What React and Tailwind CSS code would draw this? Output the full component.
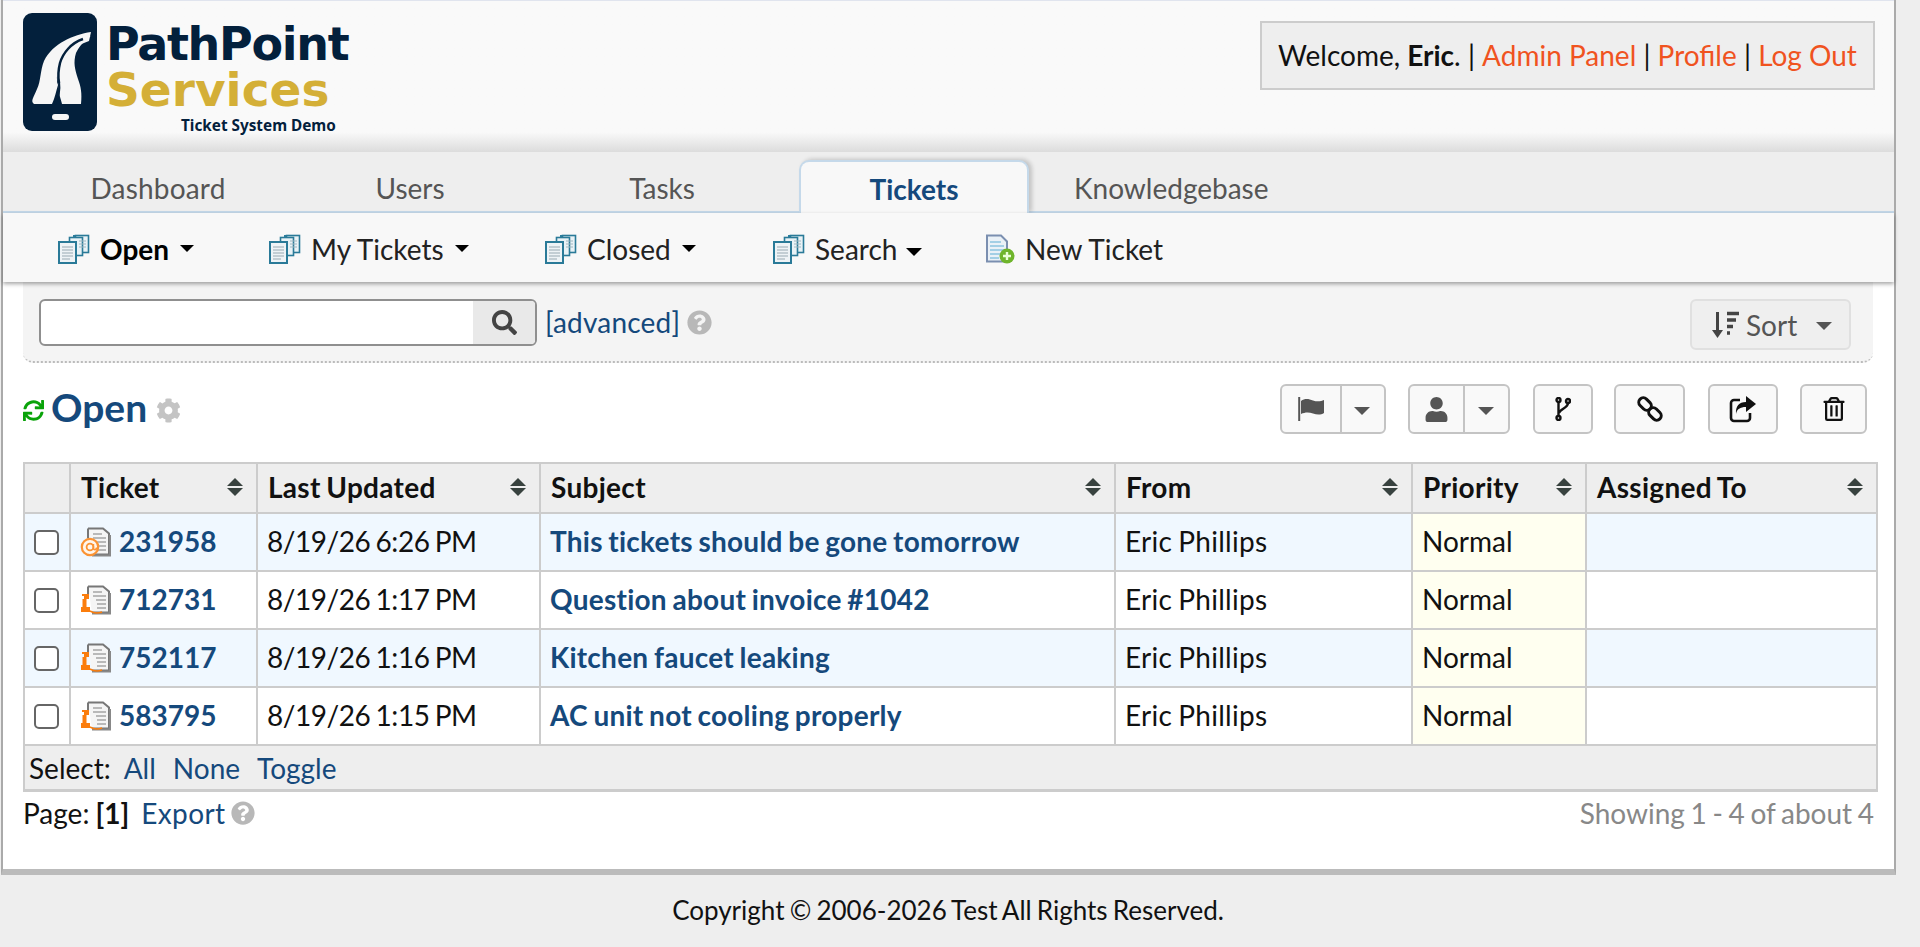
import React from "react";
import { FaSync, FaCog, FaQuestionCircle, FaSearch, FaUser, FaRegTrashAlt } from "react-icons/fa";

function DocStack() {
  return (
    <svg width="32" height="30" viewBox="0 0 32 30" className="shrink-0">
      <path d="M15 1h10l2 2h-12z" fill="#2d7f9e" />
      <rect x="17.5" y="1.5" width="13" height="17" fill="#e9f2f6" stroke="#2a7a98" strokeWidth="1.6" />
      <rect x="11.5" y="3.5" width="13" height="18" fill="#e9f2f6" stroke="#2a7a98" strokeWidth="1.6" />
      <rect x="1" y="8" width="17" height="21" fill="#eef3f6" stroke="#2a7a98" strokeWidth="2" />
      <path d="M4 13h11M4 16h11M4 19h11M4 22h11M4 25h8" stroke="#b5c2c9" strokeWidth="1.4" />
      <path d="M21 7h7M21 10h7M21 13h7" stroke="#9fb5c0" strokeWidth="1.2" />
    </svg>
  );
}

function NewDoc() {
  return (
    <svg width="30" height="30" viewBox="0 0 30 30" className="shrink-0">
      <path d="M2 1.5h14l6 6v20H2z" fill="#eaf1f7" stroke="#7b8fb0" strokeWidth="2" />
      <path d="M5 8h11M5 12h14M5 16h14M5 20h10M5 24h9" stroke="#8cc3e0" strokeWidth="1.6" />
      <circle cx="22" cy="22" r="7.5" fill="#6fb52c" />
      <path d="M18 22h8M22 18v8" stroke="#eaffd8" strokeWidth="2.4" />
    </svg>
  );
}

function TicketIcon({ kind }) {
  return (
    <svg width="32" height="30" viewBox="0 0 32 30" className="shrink-0">
      <path d="M8 1.5h15l6 5v21H12" fill="#f5f5f5" stroke="#777" strokeWidth="2" />
      <path d="M8 1.5v10" stroke="#777" strokeWidth="2" />
      <path d="M12 28.5h18V8" fill="none" stroke="#888" strokeWidth="2" />
      <path d="M13 7h9M13 11h13M16 15h10M17 19h9M17 23h9" stroke="#a5a5a5" strokeWidth="1.5" />
      {kind === "mail" ? (
        <g fill="none" stroke="#fb9333">
          <circle cx="10" cy="20" r="8.2" strokeWidth="2.2" fill="#fff6ec" />
          <circle cx="10" cy="20" r="3.4" strokeWidth="1.8" />
          <path d="M13.4 17v4.2c0 2 3.2 2 3.2 -.8" strokeWidth="1.6" />
        </g>
      ) : (
        <g>
          <path d="M2 9h7v5H6.5v8H10v5H1v-5h1.5v-8H4v-3H2z" fill="#fb7d0c" />
          <path d="M10 26c4 2.5 8 2.5 12 1" fill="none" stroke="#fb7d0c" strokeWidth="1.6" />
        </g>
      )}
    </svg>
  );
}

function Caret({ className = "" }) {
  return <span className={"inline-block h-0 w-0 border-x-[7px] border-t-[7px] border-x-transparent border-t-black " + className} />;
}

function GrayCaret() {
  return <span className="inline-block h-0 w-0 border-x-[8px] border-t-[8px] border-x-transparent border-t-[#555]" />;
}

function SortArrows() {
  return (
    <span className="ml-auto flex flex-col gap-[2px]">
      <span className="block h-0 w-0 border-x-[8px] border-b-[8px] border-x-transparent border-b-[#38423f]" />
      <span className="block h-0 w-0 border-x-[8px] border-t-[8px] border-x-transparent border-t-[#38423f]" />
    </span>
  );
}

function SubItem({ label, bold, width, big }) {
  return (
    <div className={"flex items-center " + width}>
      <DocStack />
      <span className={"ml-[10px] [word-spacing:0] " + (bold ? "font-bold text-black" : "text-[#222]")}>{label}</span>
      {big ? <Caret className="ml-[9px] mt-[5px] border-x-[8px] border-t-[8px]" /> : <Caret className="ml-[11px] mt-[-2px]" />}
    </div>
  );
}

function ToolBtn({ w, children }) {
  return (
    <div className={"flex h-[50px] items-center justify-center rounded-[6px] border-2 border-[#c4c4c4] bg-[#f9f9f9] " + w}>
      {children}
    </div>
  );
}

function SplitBtn({ w, left, icon }) {
  return (
    <div className={"flex h-[50px] items-stretch rounded-[6px] border-2 border-[#c4c4c4] bg-[#f9f9f9] " + w}>
      <div className={"flex items-center justify-center border-r-2 border-[#c4c4c4] " + left}>{icon}</div>
      <div className="flex flex-1 items-center justify-center pr-[2px] pt-[4px]"><GrayCaret /></div>
    </div>
  );
}

const rows = [
  { id: "231958", kind: "mail", date: "8/19/26 6:26 PM", subject: "This tickets should be gone tomorrow", even: true },
  { id: "712731", kind: "phone", date: "8/19/26 1:17 PM", subject: "Question about invoice #1042", even: false },
  { id: "752117", kind: "phone", date: "8/19/26 1:16 PM", subject: "Kitchen faucet leaking", even: true },
  { id: "583795", kind: "phone", date: "8/19/26 1:15 PM", subject: "AC unit not cooling properly", even: false },
];

const grid = "grid grid-cols-[46px_187px_283px_575px_297px_174px_1fr]";

export default function App() {
  return (
    <div className="min-h-[947px] overflow-hidden bg-[#eeeeee] font-['Lato',sans-serif] text-[28px] leading-[36px] text-black [word-spacing:-1.5px]">
      <div className="ml-[1px] mr-[24px] border-x-2 border-b-[6px] border-x-[#aaaaaa] border-b-[#bbbbbb] bg-white">
        {/* header */}
        <header className="flex h-[152px] items-start justify-between border-t-[1px] border-[#e0e4ee] bg-gradient-to-b from-[#f9f9f9] from-[87%] to-[#dcdcdc]">
          <div className="ml-[20px] mt-[12px] flex">
            <svg width="74" height="118" viewBox="0 0 74 118" className="shrink-0">
              <rect width="74" height="118" rx="9" fill="#03203c" />
              <path d="M68 19 C50 22 30 30 21 48 C17 58 18 68 14 76 C11 84 7 88 11 91 L29 91 C32 85 33 78 35 72 C33 66 34 58 37 50 C42 40 50 34 66 28 Z" fill="#f6f6f6" />
              <path d="M56 28 C46 33 39 40 36 48 C33 58 34 66 36 72 C35 80 38 86 39 91 L58 91 C59 80 58 74 55 66 C52 56 50 50 53 40 C55 36 58 30 68 23 Z" fill="#f6f6f6" />
              <path d="M60 26 C48 30 40 40 37 50 C35 58 35 64 36 70" stroke="#03203c" strokeWidth="2.5" fill="none" />
              <path d="M36 68 C37 76 36 84 32 91" stroke="#03203c" strokeWidth="2" fill="none" />
              <rect x="29" y="101" width="17" height="6" rx="3" fill="#f6f6f6" />
            </svg>
            <div className="ml-[9px] font-['DejaVu_Sans',sans-serif] font-bold [word-spacing:0]">
              <div className="mt-[9px] text-[46px] leading-[45px] tracking-[-1.3px] text-[#03203c]">PathPoint</div>
              <div className="text-[47px] leading-[45px] text-[#d4af37]">Services</div>
              <div className="ml-[75px] mt-[4px] whitespace-nowrap font-['Noto_Sans',sans-serif] text-[15.3px] leading-[18px] text-[#03203c]">Ticket System Demo</div>
            </div>
          </div>
          <div className="mr-[19px] mt-[20px] flex h-[69px] w-[615px] items-center justify-center border-2 border-[#cccccc] bg-[#eeeeee] pb-[2px] whitespace-pre text-[#111] [word-spacing:0]">
            Welcome, <b>Eric</b>. | <span className="text-[#f0531f]">Admin Panel</span> | <span className="text-[#f0531f]">Profile</span> | <span className="text-[#f0531f]">Log Out</span>
          </div>
        </header>

        {/* tabs */}
        <nav className="flex h-[61px] items-end gap-[22px] border-b-2 border-[#c5d9ea] bg-[#eeeeee] pl-[40px] text-[#555]">
          <div className="flex h-[52px] w-[230px] items-center justify-center pt-[5px] tracking-[0.2px]">Dashboard</div>
          <div className="flex h-[52px] w-[230px] items-center justify-center pt-[5px]">Users</div>
          <div className="flex h-[52px] w-[230px] items-center justify-center pt-[5px]">Tasks</div>
          <div className="mb-[-2px] flex h-[53px] w-[230px] items-center justify-center rounded-t-[10px] border-x-2 border-t-2 border-[#c5d9ea] bg-[#f8f8f8] pt-[2px] font-bold text-[#15497c] shadow-[3px_-1px_4px_rgba(0,0,0,0.18)]">Tickets</div>
          <div className="flex h-[52px] items-center pl-[23px] pt-[5px]">Knowledgebase</div>
        </nav>

        {/* sub nav */}
        <div className="relative z-10 flex h-[69px] items-center bg-[#f8f8f8] pl-[55px] pt-[3px] shadow-[0_2px_4px_rgba(0,0,0,0.35)]">
          <SubItem label="Open" bold width="w-[211px]" />
          <SubItem label="My Tickets" width="w-[276px]" />
          <SubItem label="Closed" width="w-[228px]" />
          <SubItem label="Search" big width="w-[212px]" />
          <div className="flex items-center">
            <NewDoc />
            <span className="ml-[10px] text-[#222] [word-spacing:0]">New Ticket</span>
          </div>
        </div>

        {/* main */}
        <main className="pb-[38px] pl-[20px] pr-[21px]">
          <div className="flex h-[81px] items-start rounded-b-[10px] border-b-2 border-dotted border-[#bbbbbb] bg-[#f4f4f4] pl-[16px] pr-[22px] pt-[17px]">
            <div className="flex h-[47px] w-[498px] overflow-hidden rounded-[6px] border-2 border-[#8f8f8f] bg-white">
              <div className="flex-1" />
              <div className="flex w-[62px] items-center justify-center bg-[#e9e9e9] text-[#444]"><FaSearch size={25} /></div>
            </div>
            <span className="ml-[8px] mt-[5px] tracking-[0.2px] text-[#15497c]">[advanced]</span>
            <FaQuestionCircle className="ml-[7px] mt-[11px] text-[#b8b8b8]" size={25} />
            <div className="ml-auto flex h-[51px] w-[161px] items-center rounded-[6px] border-2 border-[#e0e0e0] bg-[#efefef] pl-[20px] text-[#555]">
              <svg width="30" height="28" viewBox="0 0 30 28" className="shrink-0">
                <path d="M5.5 1v22" stroke="#444" strokeWidth="3" />
                <path d="M0 19l5.5 8 5.5-8z" fill="#444" />
                <path d="M15 2.5h12M15 9h9M15 15.5h6M15 22h3" stroke="#444" strokeWidth="3.4" />
              </svg>
              <span className="ml-[4px]">Sort</span>
              <span className="ml-[19px] flex items-center pt-[3px]"><GrayCaret /></span>
            </div>
          </div>

          <div className="flex h-[99px] items-start">
            <FaSync className="mt-[37px] text-[#0aa30a]" size={21} />
            <h1 className="ml-[7px] mt-[21px] text-[39px] leading-[46px] font-bold text-[#15497c]">Open</h1>
            <FaCog className="ml-[9px] mt-[35px] text-[#c4c4c4]" size={25} />
            <div className="ml-auto mr-[6px] mt-[21px] flex">
              <SplitBtn
                w="w-[106px]"
                left="w-[60px]"
                icon={
                  <svg width="27" height="24" viewBox="0 0 27 24">
                    <path d="M1.2 0v24" stroke="#555" strokeWidth="2" />
                    <path d="M3 4c4-3 8-2 12-.5 4 1.400 8 1 11-.5v13c-3 2-7 2-11 .5-4-1.500-8-1.500-12 .5z" fill="#555" />
                  </svg>
                }
              />
              <div className="ml-[22px]"><SplitBtn w="w-[102px]" left="w-[55px]" icon={<FaUser size={25} className="text-[#555]" />} /></div>
              <div className="ml-[23px]">
                <ToolBtn w="w-[60px]">
                  <svg width="16" height="24" viewBox="0 0 16 24" fill="none" stroke="#111" strokeWidth="2.4">
                    <circle cx="3.5" cy="3" r="2" /><circle cx="13" cy="4" r="2" /><circle cx="3.500" cy="21" r="2" />
                    <path d="M3.5 5v14M13 6c0 5-8 6-9 10" />
                  </svg>
                </ToolBtn>
              </div>
              <div className="ml-[21px]">
                <ToolBtn w="w-[71px]">
                  <svg width="26" height="26" viewBox="0 0 26 26" fill="none" stroke="#111" strokeWidth="3">
                    <g transform="rotate(45 13 13)">
                      <rect x="-1" y="8.5" width="14" height="9" rx="4.500" />
                      <rect x="13" y="8.5" width="14" height="9" rx="4.500" />
                    </g>
                  </svg>
                </ToolBtn>
              </div>
              <div className="ml-[23px]">
                <ToolBtn w="w-[70px]">
                  <svg width="28" height="28" viewBox="0 0 28 28">
                    <path d="M11 5H5a3 3 0 0 0-3 3v15a3 3 0 0 0 3 3h13a3 3 0 0 0 3-3v-5" fill="none" stroke="#111" strokeWidth="2.600" />
                    <path d="M17 1l10 8-10 8v-5c-6 0-9 2-10 7-.5-8 3-12 10-12z" fill="#111" />
                  </svg>
                </ToolBtn>
              </div>
              <div className="ml-[22px]"><ToolBtn w="w-[67px]"><FaRegTrashAlt size={24} className="text-[#111]" /></ToolBtn></div>
            </div>
          </div>

          {/* table */}
          <div className="mr-[-5px] border-2 border-[#cccccc] border-b-[3px]">
            <div className={grid + " h-[50px] border-b-2 border-[#cccccc] bg-[#eeeeee] font-bold"}>
              <div className="border-r-2 border-[#cccccc]" />
              {["Ticket", "Last Updated", "Subject", "From", "Priority", "Assigned To"].map((h, i) => (
                <div key={h} className={"flex items-center pb-[2px] pl-[10px] pr-[13px] tracking-[0.3px] " + (i < 5 ? "border-r-2 border-[#cccccc]" : "")}>
                  <span className="text-[#111]">{h}</span>
                  <SortArrows />
                </div>
              ))}
            </div>
            {rows.map((r) => (
              <div key={r.id} className={grid + " h-[58px] border-b-2 border-[#cccccc] " + (r.even ? "bg-[#f0f8ff]" : "bg-white")}>
                <div className="flex items-center justify-center border-r-2 border-[#cccccc] pr-[2px]">
                  <span className="block h-[25px] w-[25px] rounded-[5px] border-2 border-[#666] bg-white" />
                </div>
                <div className="flex items-center border-r-2 border-[#cccccc] pl-[9px] text-[#15497c]">
                  <TicketIcon kind={r.kind} />
                  <span className="ml-[7px] pb-[2px] font-bold">{r.id}</span>
                </div>
                <div className="flex items-center border-r-2 border-[#cccccc] pb-[2px] pl-[9px] tracking-[-0.45px] text-[#111]">{r.date}</div>
                <div className="flex items-center border-r-2 border-[#cccccc] pb-[2px] pl-[9px] font-bold tracking-[0.25px] text-[#15497c]">{r.subject}</div>
                <div className="flex items-center border-r-2 border-[#cccccc] pb-[2px] pl-[9px] tracking-[0.3px] text-[#111]">Eric Phillips</div>
                <div className="flex items-center border-r-2 border-[#cccccc] bg-[#fffff0] pb-[2px] pl-[9px] text-[#111]">Normal</div>
                <div />
              </div>
            ))}
            <div className="flex h-[43px] items-center gap-[17px] bg-[#eeeeee] pl-[4px]">
              <span className="text-[#111]">Select:</span>
              <span className="ml-[-4px] text-[#15497c]">All</span>
              <span className="text-[#15497c]">None</span>
              <span className="text-[#15497c]">Toggle</span>
            </div>
          </div>
          <div className="mt-[3px] mr-[-1px] flex items-center">
            <span className="text-[#111]">Page:</span>
            <b className="ml-[6px] text-[#111]">[1]</b>
            <span className="ml-[12px] tracking-[0.4px] text-[#15497c]">Export</span>
            <FaQuestionCircle className="ml-[5px] text-[#b8b8b8]" size={24} />
            <span className="ml-auto text-[#888]">Showing 1 - 4 of about 4</span>
          </div>
        </main>
      </div>
      <footer className="mt-[19px] pr-[24px] text-center text-[26px] leading-[32px] text-[#111]">Copyright © 2006-2026 Test All Rights Reserved.</footer>
    </div>
  );
}
